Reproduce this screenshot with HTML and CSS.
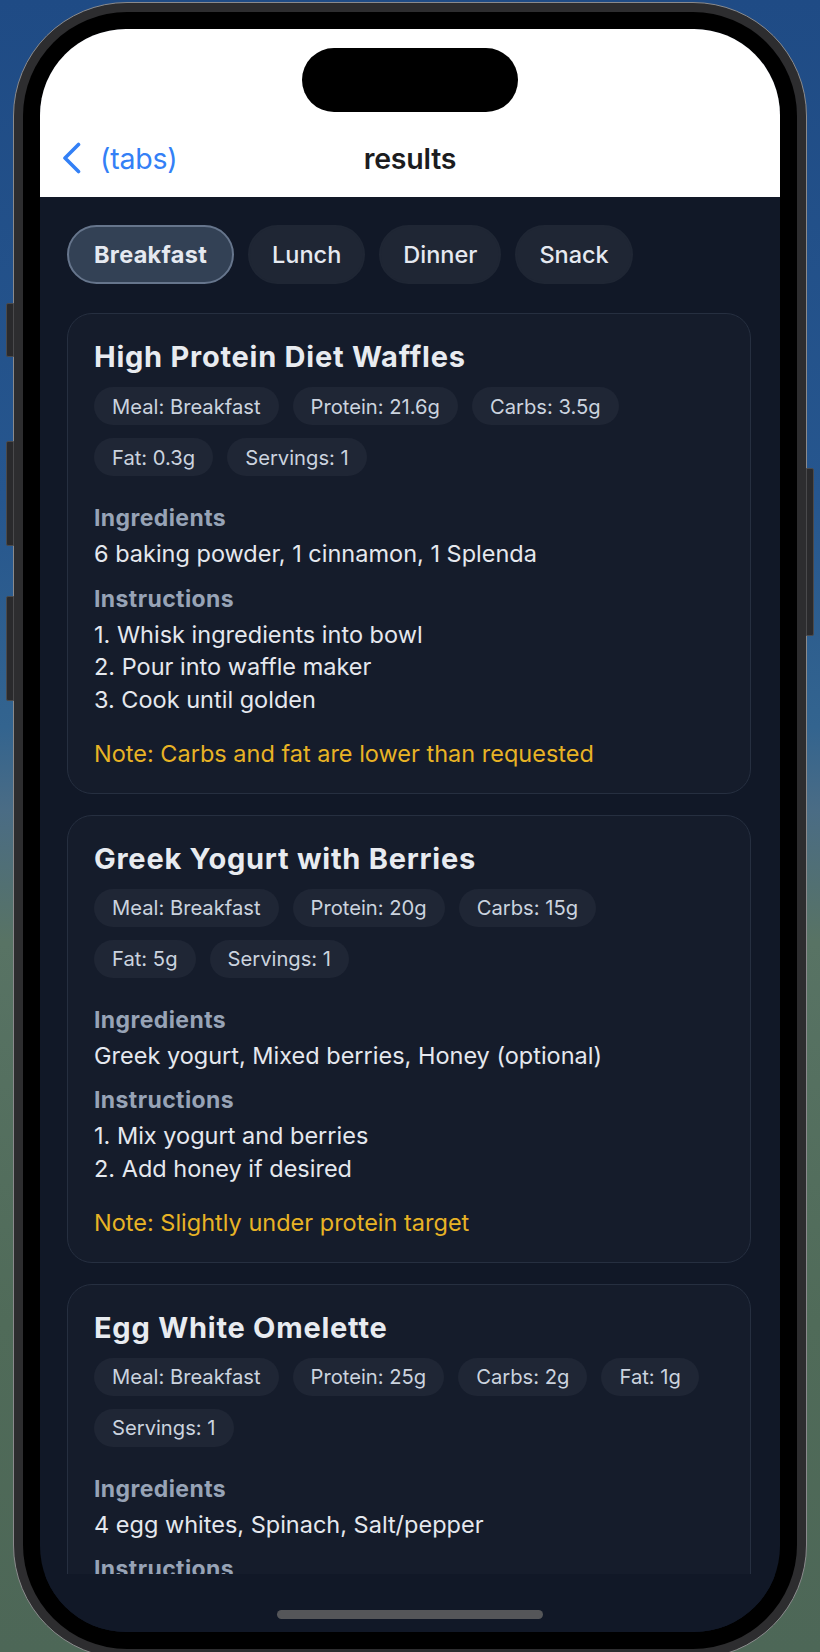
FILE: index.html
```html
<!DOCTYPE html>
<html lang="en">
<head>
<meta charset="utf-8">
<title>results</title>
<link rel="stylesheet" href="styles.css">
</head>
<body>
<div class="stage">
  <div class="phone">
    <span class="side-btn btn-action"></span>
    <span class="side-btn btn-vol-up"></span>
    <span class="side-btn btn-vol-down"></span>
    <span class="side-btn btn-power"></span>
    <div class="bezel">
      <div class="screen">
        <div class="island"></div>
        <header class="nav">
          <div class="nav-row">
            <a class="back" href="#">
              <svg class="chev" width="20" height="32" viewBox="0 0 20 32" aria-hidden="true">
                <polyline points="16.5,2.5 3,16 16.5,29.5" fill="none" stroke="#3380f6" stroke-width="3.6" stroke-linecap="round" stroke-linejoin="round"/>
              </svg>
              <span>(tabs)</span>
            </a>
            <h1 class="nav-title">results</h1>
            <span></span>
          </div>
        </header>
        <main class="content">
          <div class="chips">
            <button class="chip chip-active">Breakfast</button>
            <button class="chip">Lunch</button>
            <button class="chip">Dinner</button>
            <button class="chip">Snack</button>
          </div>

          <article class="card">
            <h2 class="card-title">High Protein Diet Waffles</h2>
            <div class="tags">
              <span class="tag">Meal: Breakfast</span>
              <span class="tag">Protein: 21.6g</span>
              <span class="tag">Carbs: 3.5g</span>
              <span class="tag">Fat: 0.3g</span>
              <span class="tag">Servings: 1</span>
            </div>
            <h3 class="label">Ingredients</h3>
            <p class="text">6 baking powder, 1 cinnamon, 1 Splenda</p>
            <h3 class="label label-gap">Instructions</h3>
            <div class="steps">
              <p class="text">1. Whisk ingredients into bowl</p>
              <p class="text">2. Pour into waffle maker</p>
              <p class="text">3. Cook until golden</p>
            </div>
            <p class="note">Note: Carbs and fat are lower than requested</p>
          </article>

          <article class="card">
            <h2 class="card-title">Greek Yogurt with Berries</h2>
            <div class="tags">
              <span class="tag">Meal: Breakfast</span>
              <span class="tag">Protein: 20g</span>
              <span class="tag">Carbs: 15g</span>
              <span class="tag">Fat: 5g</span>
              <span class="tag">Servings: 1</span>
            </div>
            <h3 class="label">Ingredients</h3>
            <p class="text">Greek yogurt, Mixed berries, Honey (optional)</p>
            <h3 class="label label-gap">Instructions</h3>
            <div class="steps">
              <p class="text">1. Mix yogurt and berries</p>
              <p class="text">2. Add honey if desired</p>
            </div>
            <p class="note">Note: Slightly under protein target</p>
          </article>

          <article class="card card-cut">
            <h2 class="card-title">Egg White Omelette</h2>
            <div class="tags">
              <span class="tag">Meal: Breakfast</span>
              <span class="tag">Protein: 25g</span>
              <span class="tag">Carbs: 2g</span>
              <span class="tag">Fat: 1g</span>
              <span class="tag">Servings: 1</span>
            </div>
            <h3 class="label">Ingredients</h3>
            <p class="text">4 egg whites, Spinach, Salt/pepper</p>
            <h3 class="label label-gap">Instructions</h3>
          </article>
        </main>
        <div class="safe-bottom"></div>
        <div class="home-indicator"></div>
      </div>
    </div>
  </div>
</div>
</body>
</html>
```

FILE: styles.css
```css
* { box-sizing: border-box; }

html, body {
  margin: 0;
  padding: 0;
}

body {
  width: 820px;
  height: 1652px;
  overflow: hidden;
  font-family: Inter, "Noto Sans", "Liberation Sans", sans-serif;
  background: linear-gradient(180deg,
    #1f4b85 0%,
    #26568e 30%,
    #33648f 44%,
    #4a6c85 49%,
    #587364 57%,
    #506b59 80%,
    #4d6757 100%);
}

.stage {
  width: 820px;
  height: 1652px;
  padding: 2px 0 0 13px;
}

.phone {
  position: relative;
  width: 794px;
  height: 1657px;
  border-radius: 114px;
  background: #2d2d2f;
  border: 1px solid #8a8a8c;
  padding: 9px;
}

.side-btn {
  position: absolute;
  width: 8px;
  background: #2a2a2c;
  border: 1px solid #4a4a4c;
}
.btn-action { left: -8px; top: 300px; height: 54px; border-radius: 2px 0 0 2px; }
.btn-vol-up { left: -8px; top: 438px; height: 105px; border-radius: 2px 0 0 2px; }
.btn-vol-down { left: -8px; top: 593px; height: 105px; border-radius: 2px 0 0 2px; }
.btn-power { right: -8px; top: 465px; height: 168px; border-radius: 0 2px 2px 0; }

.bezel {
  width: 100%;
  height: 100%;
  background: #000;
  border-radius: 104px;
  padding: 17px;
}

.screen {
  position: relative;
  width: 740px;
  height: 1603px;
  border-radius: 86px;
  overflow: hidden;
  background: #111827;
  display: flex;
  flex-direction: column;
}

.island {
  position: absolute;
  left: 262px;
  top: 19px;
  width: 216px;
  height: 64px;
  border-radius: 32px;
  background: #000;
}

.nav {
  flex: 0 0 168px;
  background: #fff;
  display: flex;
  flex-direction: column;
  justify-content: flex-end;
  padding-bottom: 17px;
}

.nav-row {
  height: 44px;
  display: grid;
  grid-template-columns: 1fr auto 1fr;
  align-items: center;
}

.back {
  display: flex;
  align-items: center;
  gap: 18px;
  padding-left: 22px;
  color: #3380f6;
  text-decoration: none;
  font-size: 28.5px;
  font-weight: 400;
  letter-spacing: -0.2px;
}

.chev { display: block; flex: 0 0 auto; }

.nav-title {
  margin: 0;
  font-size: 28.5px;
  font-weight: 600;
  color: #1c1c1e;
  letter-spacing: -0.2px;
}

.content {
  flex: 1 1 auto;
  overflow: hidden;
  padding: 28px 29px 0 27px;
}

.safe-bottom {
  flex: 0 0 58px;
  background: #111827;
}

.home-indicator {
  position: absolute;
  left: 237px;
  bottom: 13px;
  width: 266px;
  height: 9px;
  border-radius: 5px;
  background: #555659;
}

.chips {
  display: flex;
  margin-bottom: 29px;
}

.chip {
  height: 59px;
  margin-right: 14px;
  padding: 0 22px;
  border-radius: 30px;
  border: 2px solid #1f2634;
  background: #1f2634;
  color: #e5e9f0;
  font-family: inherit;
  font-size: 23.5px;
  font-weight: 500;
}

.chip-active {
  background: #334155;
  border-color: #66758c;
  font-weight: 700;
  padding: 0 25px;
  letter-spacing: 0.3px;
}

.card {
  background: #151c2b;
  border: 1px solid #262f40;
  border-radius: 25px;
  padding: 25px 26px 23px;
  margin-bottom: 21px;
}

.card-cut { padding-bottom: 120px; }

.card-title {
  margin: 0;
  font-size: 29px;
  line-height: 36px;
  font-weight: 700;
  color: #e8ebf0;
  letter-spacing: 0.75px;
}

.tags {
  display: flex;
  flex-wrap: wrap;
  margin-top: 12px;
  padding-right: 6px;
}

.tag {
  height: 38px;
  display: flex;
  align-items: center;
  padding: 0 18px;
  margin: 0 14px 13px 0;
  border-radius: 19px;
  background: #1f2635;
  color: #cbd3df;
  font-size: 20.2px;
}

.label {
  margin: 13px 0 0;
  font-size: 23px;
  line-height: 32px;
  font-weight: 700;
  color: #97a3b6;
  letter-spacing: 0.4px;
}

.label-gap { margin-top: 12px; }

.text {
  margin: 4px 0 0;
  font-size: 23.5px;
  line-height: 32.5px;
  color: #e5e8ee;
}

.steps { margin-top: 4px; }
.steps .text { margin: 0; }

.note {
  margin: 21.5px 0 0;
  font-size: 23.5px;
  line-height: 32px;
  color: #e8b325;
}
```
